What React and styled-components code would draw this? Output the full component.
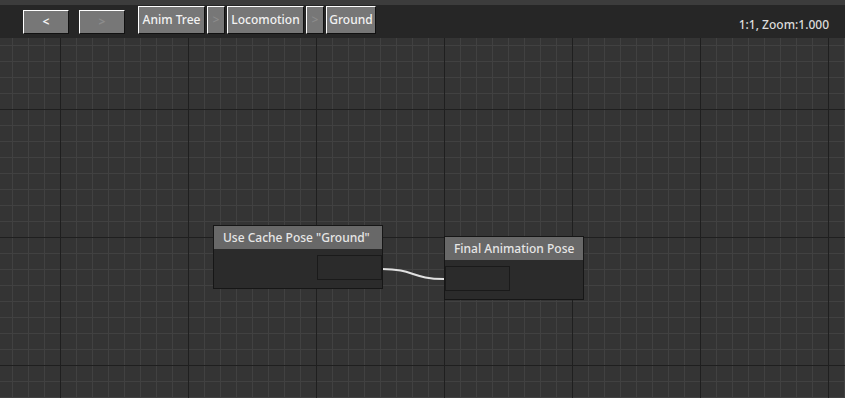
import React from "react";
import styled, { createGlobalStyle } from "styled-components";

const GlobalStyle = createGlobalStyle`
  html, body {
    margin: 0;
    padding: 0;
    background: #333;
  }
  body {
    font-family: "Noto Sans", "DejaVu Sans", sans-serif;
  }
`;

const Page = styled.div`
  width: 845px;
  height: 398px;
  display: flex;
  flex-direction: column;
  overflow: hidden;
`;

const TopStrip = styled.div`
  height: 5px;
  background: #3c3c3c;
`;

const Toolbar = styled.div`
  height: 33px;
  background: #262626;
  display: flex;
  align-items: flex-start;
  padding: 1px 16px 0 23px;
  box-sizing: border-box;
`;

const NavGroup = styled.div`
  display: flex;
  gap: 10px;
  margin-top: 4px;
  margin-right: 13px;
`;

const Crumbs = styled.div`
  display: flex;
  gap: 2px;
`;

const Button = styled.button`
  box-sizing: border-box;
  height: ${(p) => (p.$nav ? 24 : 28)}px;
  width: ${(p) => p.$w}px;
  padding: 0;
  margin: 0;
  background: #777;
  border: 1px solid;
  border-color: #fff #111 #111 #fff;
  color: ${(p) => (p.$dim ? "#8c8c8c" : "#f2f2f2")};
  font-family: "Noto Sans", "DejaVu Sans", sans-serif;
  font-size: 12px;
  font-weight: ${(p) => (p.$nav ? 700 : 500)};
  line-height: 1;
  white-space: nowrap;
  display: flex;
  align-items: center;
  justify-content: center;
`;

const Status = styled.div`
  margin-left: auto;
  margin-top: 10px;
  color: #dcdcdc;
  font-size: 12px;
  font-weight: 500;
`;

const Canvas = styled.div`
  position: relative;
  flex: 1;
  background-color: #343434;
  background-image:
    linear-gradient(#1f1f1f 1px, transparent 1px),
    linear-gradient(90deg, #1f1f1f 1px, transparent 1px),
    linear-gradient(#414141 1px, transparent 1px),
    linear-gradient(90deg, #414141 1px, transparent 1px);
  background-size: 128px 128px, 128px 128px, 16px 16px, 16px 16px;
  background-position: 0 71px, 60px 0, 0 7px, 12px 0;
`;

const Node = styled.div`
  position: absolute;
  left: ${(p) => p.$x}px;
  top: ${(p) => p.$y}px;
  width: ${(p) => p.$w}px;
  height: ${(p) => p.$h}px;
  box-sizing: border-box;
  background: #2b2b2b;
  border: 1px solid #161616;
  display: flex;
  flex-direction: column;
`;

const NodeHeader = styled.div`
  height: 23px;
  background: #686868;
  color: #e6e6e6;
  font-size: 12px;
  font-weight: 500;
  display: flex;
  align-items: center;
  padding-left: 9px;
  flex-shrink: 0;
`;

const NodeBody = styled.div`
  flex: 1;
  display: flex;
  justify-content: ${(p) => (p.$out ? "flex-end" : "flex-start")};
  padding-top: 6px;
`;

const Pin = styled.div`
  width: ${(p) => p.$w}px;
  height: 25px;
  box-sizing: border-box;
  border: 1px solid #1a1a1a;
  background: #2b2b2b;
`;

const Wire = styled.svg`
  position: absolute;
  left: 0;
  top: 0;
  pointer-events: none;
`;

export default function App() {
  return (
    <Page>
      <GlobalStyle />
      <TopStrip />
      <Toolbar>
        <NavGroup>
          <Button $nav $w={46}>&lt;</Button>
          <Button $nav $w={46} $dim>&gt;</Button>
        </NavGroup>
        <Crumbs>
          <Button $w={67}>Anim Tree</Button>
          <Button $w={18} $dim>&gt;</Button>
          <Button $w={77}>Locomotion</Button>
          <Button $w={18} $dim>&gt;</Button>
          <Button $w={50}>Ground</Button>
        </Crumbs>
        <Status>1:1, Zoom:1.000</Status>
      </Toolbar>
      <Canvas>
        <Wire width="845" height="360">
          <path
            d="M382 231 C 414 231, 412 241, 444 241"
            stroke="#e0e0e0"
            strokeWidth="2"
            fill="none"
          />
        </Wire>
        <Node $x={213} $y={187} $w={170} $h={64}>
          <NodeHeader>Use Cache Pose "Ground"</NodeHeader>
          <NodeBody $out>
            <Pin $w={65} />
          </NodeBody>
        </Node>
        <Node $x={444} $y={198} $w={140} $h={64}>
          <NodeHeader>Final Animation Pose</NodeHeader>
          <NodeBody>
            <Pin $w={65} />
          </NodeBody>
        </Node>
      </Canvas>
    </Page>
  );
}
